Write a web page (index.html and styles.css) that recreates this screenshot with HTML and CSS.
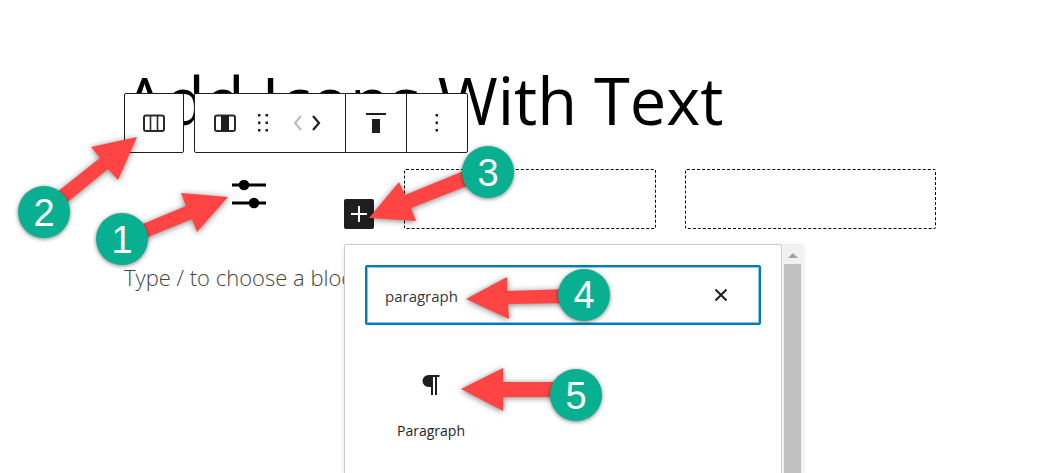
FILE: index.html
```html
<!DOCTYPE html>
<html lang="en">
<head>
    <meta charset="UTF-8">
    <meta name="viewport" content="width=device-width, initial-scale=1.0">
    <title>Add Icons With Text</title>
    <link rel="stylesheet" href="styles.css">
</head>
<body>
    <main class="editor">
        <h1 class="post-title">Add Icons With Text</h1>

        <div class="columns">
            <div class="column filled">
                <svg class="sliders" width="34" height="30" viewBox="0 0 34 30">
                    <path d="M0 6h34M0 24h34" stroke="#000" stroke-width="3"/>
                    <circle cx="12" cy="6" r="5.3"/>
                    <circle cx="22" cy="24" r="5.3"/>
                </svg>
            </div>
            <div class="column empty"></div>
            <div class="column empty"></div>
        </div>

        <p class="placeholder">Type / to choose a block</p>

        <!-- Block toolbar -->
        <div class="toolbar">
            <div class="toolbar-group">
                <button type="button" class="parent" aria-label="Select Columns">
                    <svg width="22" height="18" viewBox="0 0 22 18" fill="none" stroke="#2a2a2a">
                        <rect x="1" y="1.500" width="20" height="15.5" rx="2" stroke-width="2"/>
                        <path d="M7.5 1.500v15M14.5 1.500v15" stroke-width="1.6"/>
                    </svg>
                </button>
            </div>
            <div class="toolbar-group">
                <div class="segment movers">
                    <button type="button" aria-label="Column">
                        <svg width="22" height="18" viewBox="0 0 22 18">
                            <rect x="1" y="1.500" width="20" height="15.5" rx="2" fill="none" stroke="#2a2a2a" stroke-width="2"/>
                            <path d="M7 1.500h8v15.500h-8z" fill="#1e1e1e"/>
                        </svg>
                    </button>
                    <button type="button" aria-label="Drag">
                        <svg width="12" height="20" viewBox="0 0 12 20" fill="#1e1e1e">
                            <path d="M1 1h2.500v2.500h-2.500zM8.500 1h2.500v2.500h-2.500zM1 8.500h2.500v2.500h-2.500zM8.500 8.500h2.500v2.500h-2.500zM1 16h2.500v2.500h-2.500zM8.500 16h2.500v2.500h-2.500z"/>
                        </svg>
                    </button>
                    <div class="arrows">
                        <button type="button" aria-label="Move left" disabled>
                            <svg width="9" height="16" viewBox="0 0 9 16" fill="none" stroke="#bbb" stroke-width="2">
                                <path d="M8 1L2 8l6 7"/>
                            </svg>
                        </button>
                        <button type="button" aria-label="Move right">
                            <svg width="9" height="16" viewBox="0 0 9 16" fill="none" stroke="#1e1e1e" stroke-width="2.200">
                                <path d="M1 1l6 7l-6 7"/>
                            </svg>
                        </button>
                    </div>
                </div>
                <button type="button" class="segment" aria-label="Change vertical alignment">
                    <svg width="20" height="22" viewBox="0 0 20 22" fill="#1e1e1e">
                        <path d="M0 1h20v2h-20zM6 7h8v14h-8z"/>
                    </svg>
                </button>
                <button type="button" class="segment" aria-label="Options">
                    <svg width="4" height="20" viewBox="0 0 4 20" fill="#1e1e1e">
                        <path d="M.5 1h2.500v2.500h-2.500zM.5 8.500h2.500v2.500h-2.500zM.5 16h2.500v2.500h-2.500z"/>
                    </svg>
                </button>
            </div>
        </div>

        <button type="button" class="add-block" aria-label="Add block">
            <svg width="16" height="16" viewBox="0 0 16 16" stroke="#fff" stroke-width="2">
                <path d="M8 0v16M0 8h16"/>
            </svg>
        </button>

        <!-- Inserter popover -->
        <div class="inserter">
            <div class="inserter-content">
                <div class="search">
                    <input type="text" value="paragraph" aria-label="Search for a block">
                    <button type="button" aria-label="Reset search">
                        <svg width="14" height="14" viewBox="0 0 14 14" stroke="#1e1e1e" stroke-width="2">
                            <path d="M1.500 1.500l11 11M12.500 1.500l-11 11"/>
                        </svg>
                    </button>
                </div>
                <div class="results">
                    <button type="button" class="block-type">
                        <svg width="18" height="20" viewBox="0 0 18 20" fill="#1e1e1e">
                            <path d="M6.500 0h11v2h-2.500v18h-2v-18h-2v18h-2v-8h-2.500a6 6 0 0 1 0-12z"/>
                        </svg>
                        <span>Paragraph</span>
                    </button>
                </div>
            </div>
            <div class="scrollbar">
                <svg width="10" height="5" viewBox="0 0 10 5"><path d="M0 5l5-5l5 5z" fill="#a3a3a3"/></svg>
                <div class="thumb"></div>
            </div>
        </div>
    </main>

    <!-- Numbered steps -->
    <svg class="steps" width="1046" height="473" viewBox="0 0 1046 473">
        <g class="pointer">
            <path d="M137 137L91 147L100 158L56 193L65 204L108 169L118 180z"/>
            <path d="M228 197L181 193L186 206L138 226L143 239L192 219L197 232z"/>
            <path d="M369 218L399 182L405 195L466 170L472 184L411 208L416 221z"/>
            <path d="M466 299L507 277L507 291L570 289L570 303L508 304L509 319z"/>
            <path d="M461 389L503 368L503 382L562 382L562 397L503 397L503 411z"/>
        </g>
        <g class="dot">
            <circle cx="44" cy="212" r="26"/>
            <circle cx="122" cy="239" r="26"/>
            <circle cx="488" cy="172" r="26"/>
            <circle cx="584" cy="295" r="26"/>
            <circle cx="576" cy="395" r="26"/>
        </g>
        <g class="number">
            <text x="44" y="226">2</text>
            <text x="122" y="253">1</text>
            <text x="488" y="186">3</text>
            <text x="584" y="308">4</text>
            <text x="576" y="409">5</text>
        </g>
    </svg>
</body>
</html>
```
FILE: styles.css
```css
* {
    box-sizing: border-box;
}
body {
    margin: 0;
    background: #fff;
    color: #000;
    font-family: "Open Sans", "Noto Sans", sans-serif;
    overflow: hidden;
}
button {
    display: flex;
    align-items: center;
    justify-content: center;
    padding: 0;
    border: none;
    background: none;
    font-family: inherit;
    cursor: pointer;
}
.editor {
    position: relative;
    min-height: 100vh;
    padding: 54px 110px 0 124px;
}
.post-title {
    margin: 0;
    font-size: 65px;
    font-weight: 400;
    line-height: 92px;
    white-space: nowrap;
}
.columns {
    display: grid;
    grid-template-columns: repeat(3, 1fr);
    gap: 29px;
    margin-top: 23px;
}
.column {
    height: 60px;
}
.filled {
    display: flex;
    justify-content: center;
    padding: 10px 2px 0 0;
}
.empty {
    border: 1px dashed #000;
    border-radius: 2px;
}
.placeholder {
    margin: 32px 0 0;
    color: #444;
    font-size: 22px;
    font-weight: 300;
    line-height: 32px;
}

/* Block toolbar */
.toolbar {
    position: absolute;
    top: 93px;
    left: 124px;
    display: flex;
    gap: 10px;
}
.toolbar-group {
    display: flex;
    height: 60px;
    border: 1px solid #1e1e1e;
    border-radius: 2px;
    background: #fff;
}
.parent {
    width: 58px;
}
.segment {
    width: 61px;
    border-left: 1px solid #1e1e1e;
}
.movers {
    display: flex;
    align-items: center;
    gap: 21px;
    width: 150px;
    padding-left: 19px;
    border-left: none;
}
.arrows {
    display: flex;
    gap: 10px;
    margin-left: 3px;
}

.add-block {
    position: absolute;
    top: 199px;
    left: 344px;
    width: 30px;
    height: 30px;
    border-radius: 2px;
    background: #1e1e1e;
}

/* Inserter popover */
.inserter {
    position: absolute;
    top: 244px;
    bottom: 0;
    left: 344px;
    display: flex;
    width: 459px;
    box-shadow: 0 2px 6px rgba(0, 0, 0, 0.1);
}
.inserter-content {
    flex: 1;
    padding: 20px;
    border: 1px solid #ccc;
    border-bottom: none;
    border-radius: 2px 2px 0 0;
    background: #fff;
}
.search {
    display: flex;
    align-items: center;
    height: 60px;
    padding-right: 31px;
    border: 2px solid #007cba;
    border-radius: 2px;
    box-shadow: inset 0 0 0 1px #8cc4e0;
}
.search input {
    flex: 1;
    min-width: 0;
    padding: 2px 18px 0;
    border: none;
    outline: none;
    background: none;
    color: #32373c;
    font-family: inherit;
    font-size: 15px;
}
.results {
    display: grid;
    grid-template-columns: repeat(3, 1fr);
    margin-top: 40px;
}
.block-type {
    flex-direction: column;
    gap: 24px;
    padding: 10px 0;
    color: #1e1e1e;
    font-size: 14px;
    line-height: 24px;
}
.scrollbar {
    display: flex;
    flex-direction: column;
    align-items: center;
    width: 21px;
    padding-top: 9px;
    background: #f1f1f1;
}
.thumb {
    flex: 1;
    width: 17px;
    margin-top: 6px;
    background: #c1c1c1;
}

/* Numbered steps */
.steps {
    position: absolute;
    top: 0;
    left: 0;
    pointer-events: none;
}
.pointer {
    fill: #ff4444;
    filter: drop-shadow(0 1px 3px rgba(0, 0, 0, 0.5));
}
.dot {
    fill: #08af90;
    filter: drop-shadow(0 1px 2px rgba(0, 0, 0, 0.5));
}
.number {
    fill: #fff;
    font-family: "Liberation Sans", sans-serif;
    font-size: 38px;
    text-anchor: middle;
}
```
